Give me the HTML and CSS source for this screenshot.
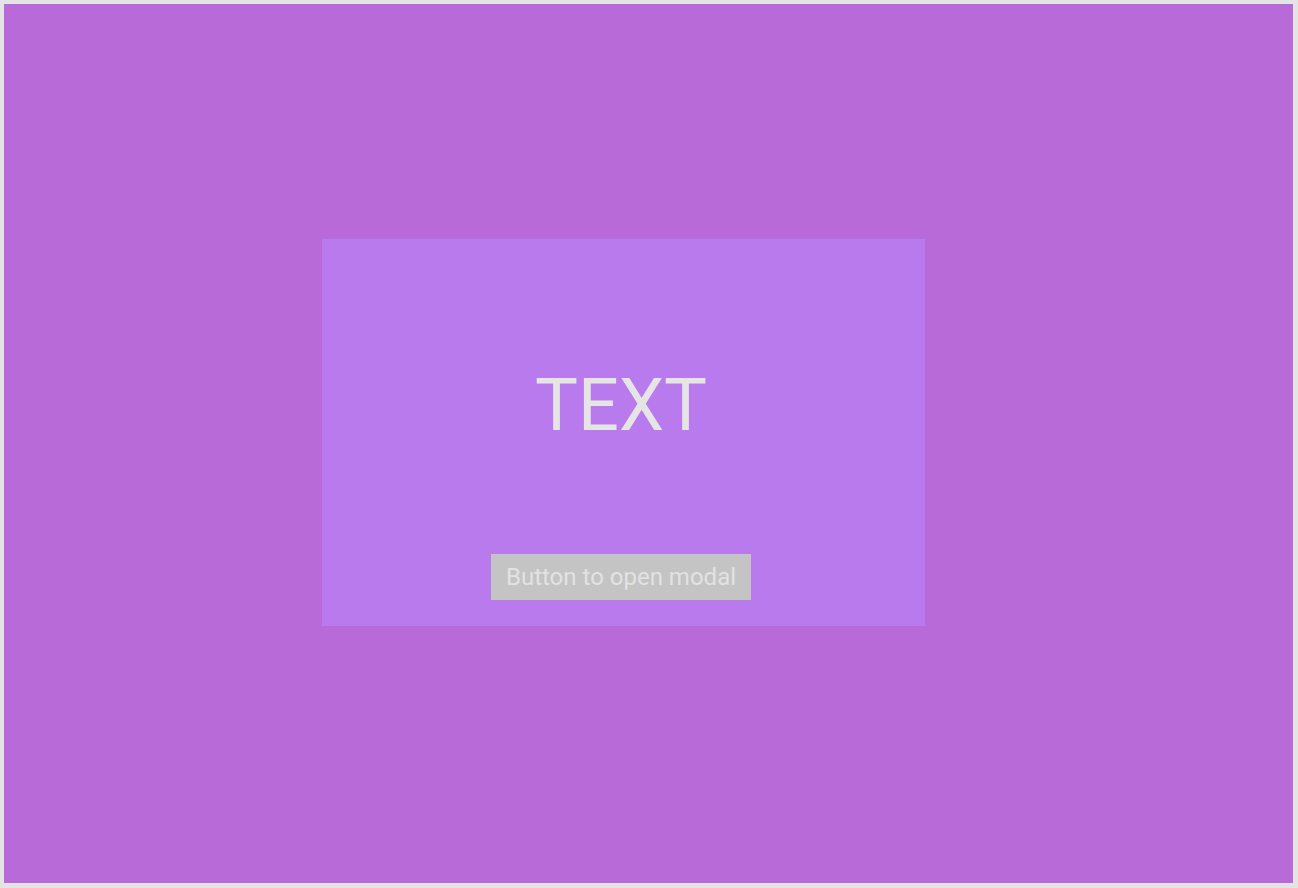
FILE: index.html
```html
<!DOCTYPE html>
<html>
<head>
<meta charset="utf-8">
<link rel="stylesheet" href="styles.css">
</head>
<body>
<div class="frame">
  <div class="stage">
    <div class="card">
      <div class="title">TEXT</div>
      <button class="open-btn">Button to open modal</button>
    </div>
  </div>
</div>
</body>
</html>
```
FILE: styles.css
```css
html, body {
  margin: 0;
  padding: 0;
}
body {
  background: #e4e4e4;
  font-family: Roboto, "Liberation Sans", sans-serif;
}
.frame {
  width: 1298px;
  height: 888px;
  padding: 4px 5px 5px 4px;
  box-sizing: border-box;
  background: #e4e4e4;
}
.stage {
  width: 100%;
  height: 100%;
  background: #b86bd8;
  display: flex;
  align-items: flex-start;
  padding: 235px 0 0 318px;
  box-sizing: border-box;
}
.card {
  width: 603px;
  height: 387px;
  background: #b87aed;
  display: flex;
  flex-direction: column;
  align-items: center;
  padding: 125px 5px 0 0;
  box-sizing: border-box;
}
.title {
  font-size: 72px;
  line-height: 84px;
  color: #e5e5e5;
  height: 84px;
}
.open-btn {
  margin-top: 106px;
  height: 46px;
  width: 260px;
  border: none;
  background: #c4c4c4;
  color: #e2e2e2;
  font-family: Roboto, "Liberation Sans", sans-serif;
  font-size: 24px;
  line-height: 28px;
  padding: 9px 0;
  box-sizing: border-box;
}
```
